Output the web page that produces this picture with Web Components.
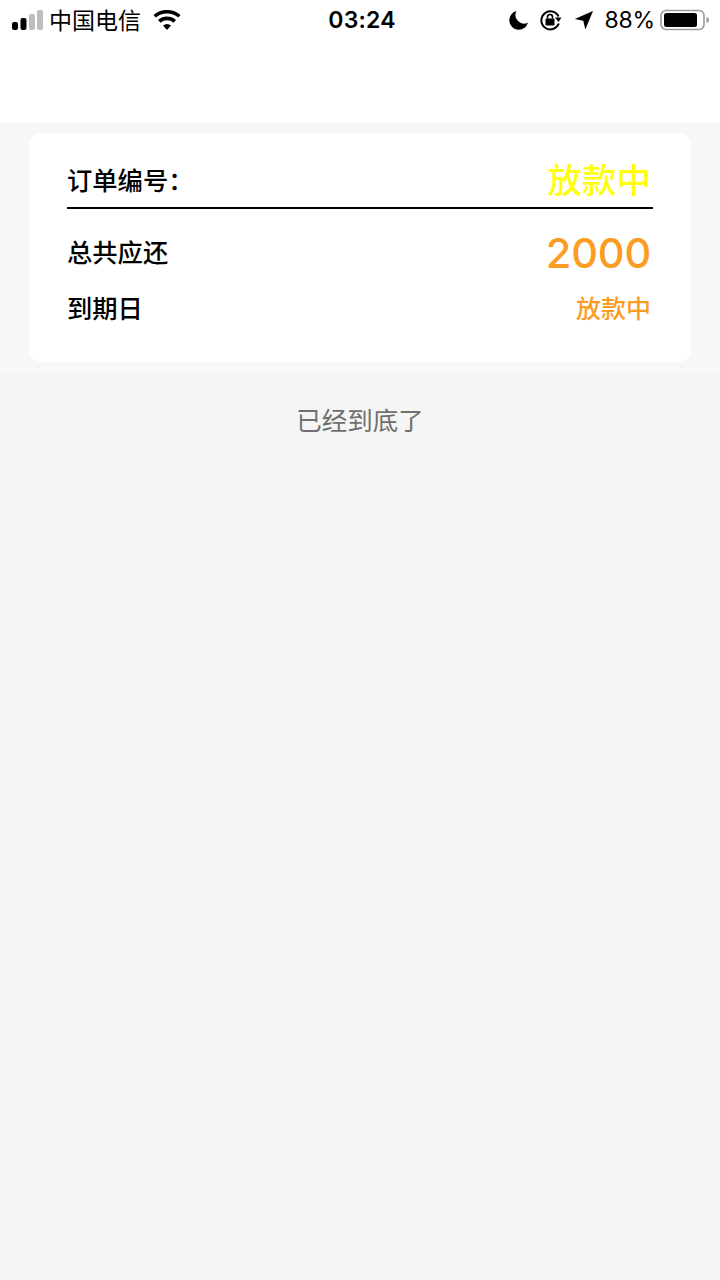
<!DOCTYPE html>
<html lang="zh">
<head>
<meta charset="utf-8">
<title>订单</title>
<style>
  html, body { margin: 0; padding: 0; }
  body {
    width: 720px;
    height: 1280px;
    overflow: hidden;
    background: #f5f5f5;
    font-family: "Inter", "Liberation Sans", "Noto Sans CJK SC", sans-serif;
  }
</style>
</head>
<body>
<app-page>
  <status-bar slot="top"></status-bar>
  <order-card slot="list"></order-card>
  <list-end>已经到底了</list-end>
</app-page>

<script>
class AppPage extends HTMLElement {
  constructor() {
    super();
    this.attachShadow({ mode: 'open' });
  }

  connectedCallback() {
    this.shadowRoot.innerHTML = `
      <style>
        :host { display: block; }
        #top { background: #fff; height: 123px; }
        #list { background: #f7f7f7; padding: 10px 29px; }
      </style>
      <div id="top"><slot name="top"></slot></div>
      <div id="list"><slot name="list"></slot></div>
      <slot></slot>
    `;
  }
}

class StatusBar extends HTMLElement {
  constructor() {
    super();
    this.attachShadow({ mode: 'open' });
  }

  connectedCallback() {
    this.shadowRoot.innerHTML = `
      <style>
        :host {
          display: grid;
          grid-template-columns: 1fr auto 1fr;
          align-items: center;
          height: 40px;
          padding: 0 10px 0 12px;
          color: #000;
          font-size: 24px;
          line-height: 40px;
        }
        .left, .right { display: flex; align-items: center; }
        .right { justify-content: flex-end; }
        .carrier { margin-left: 6px; margin-bottom: 2px; line-height: 36px; font-size: 23px; font-family: "Noto Sans CJK SC", sans-serif; }
        .time { font-size: 23px; font-weight: 600; letter-spacing: .2px; position: relative; left: 1px; }
        .pct { margin-left: 11px; font-size: 23px; letter-spacing: -.2px; }
        svg { display: block; flex: none; }
      </style>
      <div class="left">
        <svg width="31" height="20" viewBox="0 0 31 20">
          <rect x="0" y="12" width="6" height="8" rx="2" fill="#000"/>
          <rect x="8.500" y="8" width="6" height="12" rx="2" fill="#000"/>
          <rect x="17" y="4" width="6" height="16" rx="2" fill="#bdbdbd"/>
          <rect x="25" y="0" width="6" height="20" rx="2" fill="#bdbdbd"/>
        </svg>
        <span class="carrier">中国电信</span>
        <svg style="margin-left:12px" width="28" height="20" viewBox="0 0 28 20">
          <path d="M14 20 10 15.500a6 6 0 0 1 8 0Z" fill="#000"/>
          <path d="M7.500 12.800 5 10a13.500 13.500 0 0 1 18 0l-2.500 2.800a9.800 9.800 0 0 0-13 0Z" fill="#000"/>
          <path d="M2.800 7.600.5 5a20.500 20.500 0 0 1 27 0l-2.300 2.600a17 17 0 0 0-22.400 0Z" fill="#000"/>
        </svg>
      </div>
      <div class="time">03:24</div>
      <div class="right">
        <svg width="20" height="20" viewBox="0 0 20 20">
          <path d="M7.500 1A9.500 9.500 0 1 0 19 12.500 8.500 8.500 0 0 1 7.500 1Z" fill="#000"/>
        </svg>
        <svg style="margin-left:10px" width="23" height="22" viewBox="0 0 23 22">
          <path d="M19.500 7.500A9 9 0 1 0 19.800 14.500" fill="none" stroke="#000" stroke-width="2"/>
          <path d="M16 8.500h6.500L19.500 13Z" fill="#000"/>
          <rect x="6.500" y="9.500" width="9" height="7" rx="1" fill="#000"/>
          <path d="M8.500 9.500V8a2.500 2.500 0 0 1 5 0v1.500" fill="none" stroke="#000" stroke-width="1.600"/>
        </svg>
        <svg style="margin-left:12px" width="20" height="20" viewBox="0 0 20 20">
          <path d="M19 1 11.300 19.500 9.300 10.800 .8 9Z" fill="#000"/>
        </svg>
        <span class="pct">88%</span>
        <svg style="margin-left:5px" width="50" height="22" viewBox="0 0 50 22">
          <rect x="1" y="1.500" width="43" height="19" rx="5" fill="none" stroke="#9a9a9a" stroke-width="1.600"/>
          <rect x="4" y="4" width="33" height="14" rx="2.500" fill="#000"/>
          <path d="M46.500 8c1.800.4 2.500 1.500 2.500 3s-.7 2.600-2.500 3Z" fill="#9a9a9a"/>
        </svg>
      </div>
    `;
  }
}

class OrderCard extends HTMLElement {
  constructor() {
    super();
    this.attachShadow({ mode: 'open' });
  }

  connectedCallback() {
    this.shadowRoot.innerHTML = `
      <style>
        :host {
          display: block;
          background: #fff;
          border-radius: 12px;
          padding: 19px 38px 28px;
          height: 229px;
          box-sizing: border-box;
          color: #000;
          font-family: "Noto Sans CJK SC", sans-serif;
          font-weight: 500;
        }
        .row { display: flex; justify-content: space-between; align-items: center; box-sizing: border-box; padding-right: 2px; }
        .head { height: 57px; border-bottom: 2px solid #000; padding-bottom: 2px; }
        .head .label { font-size: 25.300px; }
        .head .state { font-size: 34.500px; color: #ffff0d; margin-bottom: 2px; }
        .total { height: 90px; padding-bottom: 6px; }
        .total .label, .due .label { font-size: 25.300px; }
        .total .money { font-size: 41.500px; color: #fb9d22; font-family: "Inter", sans-serif; font-weight: 500; letter-spacing: -.2px; margin-top: 4px; }
        .due { height: 22px; padding-bottom: 6px; }
        .due .state { font-size: 25px; color: #fb9d22; }
      </style>
      <div class="row head">
        <span class="label">订单编号：</span>
        <span class="state">放款中</span>
      </div>
      <div class="row total">
        <span class="label">总共应还</span>
        <span class="money">2000</span>
      </div>
      <div class="row due">
        <span class="label">到期日</span>
        <span class="state">放款中</span>
      </div>
    `;
  }
}

class ListEnd extends HTMLElement {
  constructor() {
    super();
    this.attachShadow({ mode: 'open' });
  }

  connectedCallback() {
    this.shadowRoot.innerHTML = `
      <style>
        :host {
          display: block;
          padding-top: 29px;
          text-align: center;
          color: #6f6f6f;
          font-family: "Noto Sans CJK SC", sans-serif;
          font-size: 25.500px;
          line-height: 36px;
        }
      </style>
      <slot></slot>
    `;
  }
}

customElements.define('app-page', AppPage);
customElements.define('status-bar', StatusBar);
customElements.define('order-card', OrderCard);
customElements.define('list-end', ListEnd);
</script>
</body>
</html>
